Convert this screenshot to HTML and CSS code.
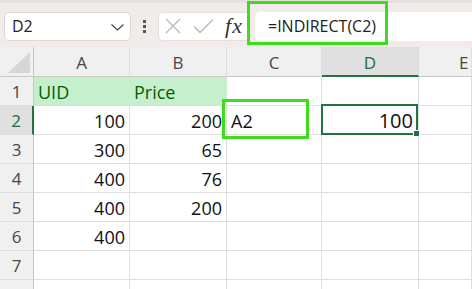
FILE: index.html
```html
<!DOCTYPE html>
<html>
<head>
<meta charset="utf-8">
<link rel="stylesheet" href="styles.css">
</head>
<body>
<div class="app">
  <div class="toolbar">
    <div class="namebox">
      <span class="name">D2</span>
      <svg class="chev" width="13" height="7" viewBox="0 0 13 7"><path d="M0.5 0.5 L6.5 6 L12.5 0.5" fill="none" stroke="#444" stroke-width="1.2"/></svg>
    </div>
    <div class="dots"><i></i><i></i><i></i></div>
    <div class="fbtns">
      <svg width="16" height="16" viewBox="0 0 16 16"><path d="M1 1 L15 15 M15 1 L1 15" stroke="#b8b8b8" stroke-width="1.3" fill="none"/></svg>
      <svg width="21" height="16" viewBox="0 0 21 16"><path d="M1 8.5 L7 14.5 L20 1.5" stroke="#b8b8b8" stroke-width="1.3" fill="none"/></svg>
      <span class="fx"><i>f</i><i>x</i></span>
    </div>
    <div class="finput">=INDIRECT(C2)</div>
  </div>
  <div class="grid">
    <div class="corner"><svg width="22" height="21" viewBox="0 0 22 21"><path d="M22 0 L22 21 L0 21 Z" fill="#d6d6d6"/></svg></div>
    <div class="ch">A</div>
    <div class="ch">B</div>
    <div class="ch">C</div>
    <div class="ch sel">D</div>
    <div class="ch e">E</div>

    <div class="rh">1</div>
    <div class="c hd">UID</div>
    <div class="c hd">Price</div>
    <div class="c"></div><div class="c"></div><div class="c"></div>

    <div class="rh sel">2</div>
    <div class="c n">100</div>
    <div class="c n">200</div>
    <div class="c">A2</div>
    <div class="c n big">100</div>
    <div class="c"></div>

    <div class="rh">3</div>
    <div class="c n">300</div>
    <div class="c n">65</div>
    <div class="c"></div><div class="c"></div><div class="c"></div>

    <div class="rh">4</div>
    <div class="c n">400</div>
    <div class="c n">76</div>
    <div class="c"></div><div class="c"></div><div class="c"></div>

    <div class="rh">5</div>
    <div class="c n">400</div>
    <div class="c n">200</div>
    <div class="c"></div><div class="c"></div><div class="c"></div>

    <div class="rh">6</div>
    <div class="c n">400</div>
    <div class="c"></div>
    <div class="c"></div><div class="c"></div><div class="c"></div>

    <div class="rh">7</div>
    <div class="c"></div><div class="c"></div><div class="c"></div><div class="c"></div><div class="c"></div>

    <div class="rh">8</div>
    <div class="c"></div><div class="c"></div><div class="c"></div><div class="c"></div><div class="c"></div>
  </div>
  <div class="hl hl-formula"></div>
  <div class="hl hl-c2"></div>
  <div class="cursor"><span class="handle"></span></div>
</div>
</body>
</html>
```
FILE: styles.css
```css
html, body {
  margin: 0;
  padding: 0;
  background: #ffffff;
  overflow: hidden;
}
.app {
  position: relative;
  width: 472px;
  height: 289px;
  overflow: hidden;
  font-family: "Open Sans", "Liberation Sans", sans-serif;
}
.toolbar {
  height: 47px;
  box-sizing: border-box;
  background: #f1ecea;
  border-top: 3px solid #e7e1de;
  display: flex;
  align-items: center;
  padding-left: 4px;
  padding-top: 2px;
}
.namebox {
  width: 127px;
  height: 29px;
  box-sizing: border-box;
  background: #ffffff;
  border: 1px solid #dcd8d6;
  border-radius: 5px;
  display: flex;
  align-items: center;
  justify-content: space-between;
  padding: 0 6px 0 7px;
}
.name {
  font-size: 16px;
  color: #222;
}
.chev { margin-top: 2px; }
.dots {
  width: 27px;
  display: flex;
  flex-direction: column;
  align-items: center;
  gap: 2px;
}
.dots i {
  display: block;
  width: 3px;
  height: 3px;
  background: #555;
}
.fbtns {
  width: 92px;
  height: 29px;
  box-sizing: border-box;
  background: #ffffff;
  border: 1px solid #e4e0de;
  border-right: none;
  border-radius: 5px 0 0 5px;
  display: flex;
  align-items: center;
  padding-left: 6px;
  gap: 12px;
}
.fx {
  font-family: "Liberation Serif", serif;
  font-size: 22px;
  color: #333;
  margin-left: -1px;
}
.fx i + i { margin-left: 1px; }
.finput {
  flex: 1;
  height: 29px;
  margin-left: 5px;
  box-sizing: border-box;
  background: #ffffff;
  border-radius: 5px 0 0 5px;
  font-size: 16px;
  color: #222;
  padding-left: 13px;
  display: flex;
  align-items: center;
}
.grid {
  display: grid;
  grid-template-columns: 34px 96px 97px 95px 97px 1fr;
  grid-template-rows: 30px repeat(8, 29px);
}
.grid > div {
  box-sizing: border-box;
  border-right: 1px solid #dedede;
  border-bottom: 1px solid #dedede;
}
.corner {
  background: #f0f0f0;
  display: flex;
  align-items: flex-end;
  justify-content: flex-end;
  padding: 0 3px 3px 0;
  border-right-color: #c8c8c8 !important;
  border-bottom-color: #c8c8c8 !important;
}
.ch {
  background: #f0f0f0;
  color: #474747;
  font-size: 17px;
  display: flex;
  align-items: center;
  justify-content: center;
  padding-top: 2px;
  border-bottom-color: #c8c8c8 !important;
}
.ch.sel {
  background: #e0e0e0;
  color: #1f6b44;
  border-bottom: 2px solid #217346 !important;
}
.ch.e {
  justify-content: flex-start;
  padding-left: 40px;
}
.rh {
  background: #f0f0f0;
  color: #474747;
  font-size: 17px;
  display: flex;
  align-items: center;
  justify-content: center;
  border-right-color: #c8c8c8 !important;
}
.rh.sel {
  background: #e0e0e0;
  color: #1f6b44;
  border-right: 2px solid #217346 !important;
}
.c {
  font-size: 18px;
  color: #111;
  display: flex;
  align-items: center;
  padding: 1px 4px 0;
  white-space: nowrap;
}
.c.n { justify-content: flex-end; }
.c.big {
  font-size: 20px;
  padding-right: 5px;
}
.c.hd {
  background: #c6efce;
  color: #006100;
  border-right-color: #c6efce !important;
}
.hl {
  position: absolute;
  box-sizing: border-box;
  border: 3px solid #3ddc1e;
}
.hl-formula {
  left: 247px;
  top: 1px;
  width: 141px;
  height: 44px;
}
.hl-c2 {
  left: 222px;
  top: 99px;
  width: 87px;
  height: 40px;
}
.cursor {
  position: absolute;
  box-sizing: border-box;
  left: 321px;
  top: 104px;
  width: 97px;
  height: 31px;
  border: 2px solid #217346;
}
.handle {
  position: absolute;
  right: -4px;
  bottom: -4px;
  width: 5px;
  height: 5px;
  background: #217346;
  border: 1px solid #fff;
}
```
